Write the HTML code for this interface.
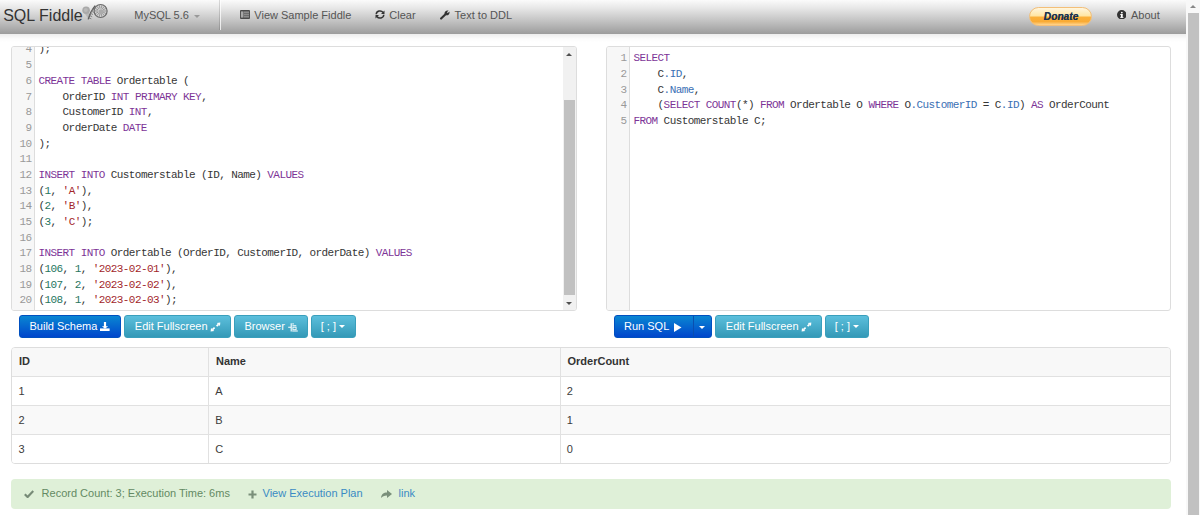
<!DOCTYPE html>
<html><head><meta charset="utf-8">
<style>
*{box-sizing:border-box;margin:0;padding:0}
html,body{width:1200px;height:515px;overflow:hidden;background:#fff;font-family:"Liberation Sans",sans-serif;color:#333}
.t{position:absolute;white-space:nowrap;font-size:11px;line-height:11px}
#nav{position:absolute;left:0;top:0;width:1186px;height:34px;background:linear-gradient(#fbfbfb,#e6e6e6 25%,#c9c9c9 55%,#9c9c9c);}
#nav .t{color:#555;top:9.5px}
#brand{position:absolute;left:3.2px;top:7.8px;font-size:16px;color:#333;line-height:16px;white-space:nowrap}
.divv{position:absolute;left:219px;top:0;width:2px;height:30px;border-left:1px solid rgba(0,0,0,0.13);border-right:1px solid rgba(255,255,255,0.75)}
#donate{position:absolute;left:1029px;top:7px;width:63px;height:19px;border-radius:10px;border:1px solid #f3bf78;background:linear-gradient(#fff6df,#ffe6a6 45%,#fbb03a 55%,#f9ab35 80%,#ffd590);}
#donate span{position:absolute;left:13.8px;top:2.8px;font-size:10.2px;line-height:11px;font-weight:bold;font-style:italic;color:#1d3350;text-shadow:0 0 0.4px #1d3350}
#vscroll{position:absolute;left:1186px;top:0;width:14px;height:515px;background:#f8f8f8}
#vscroll .thumb{position:absolute;left:2px;top:12.5px;width:11px;height:520px;background:#c1c1c1}
#vscroll .arr{position:absolute;left:4.2px;top:5px;width:0;height:0;border-left:3.5px solid transparent;border-right:3.5px solid transparent;border-bottom:3.3px solid #888}
.editor{position:absolute;top:46px;height:265px;border:1px solid #ddd;border-radius:3px;background:#fff;overflow:hidden}
.gutter{position:absolute;left:0;top:0;bottom:0;width:23px;background:#f7f7f7;border-right:1px solid #ddd}
.code{position:absolute;font-family:"Liberation Mono",monospace;font-size:11px;letter-spacing:-0.58px;line-height:15.69px;white-space:pre;color:#363636}
.sb{position:absolute;right:0;top:0;bottom:0;width:13px;background:#f1f1f1}
.sbth{position:absolute;left:1px;right:1px;top:53px;height:195px;background:#c1c1c1}
.up{position:absolute;left:3px;top:6px;width:0;height:0;border-left:3px solid transparent;border-right:3px solid transparent;border-bottom:3px solid #505050}
.dn{position:absolute;left:3px;bottom:5.4px;width:0;height:0;border-left:3px solid transparent;border-right:3px solid transparent;border-top:3px solid #505050}
.ln{position:absolute;font-family:"Liberation Mono",monospace;font-size:11px;letter-spacing:-0.58px;line-height:15.69px;white-space:pre;color:#999;text-align:right}
.k{color:#7d3497}
.s{color:#a2262b}
.n{color:#267660}
.v{color:#3a70b4}
.btn{position:absolute;top:315px;height:23px;border-radius:3px;overflow:hidden}
.btn .t{color:#fff;top:11.5px}
.bp{background:linear-gradient(#0a86d2,#0046cc);border:1px solid #0050c0}
.bi{background:linear-gradient(#5cbfdc,#3499b7);border:1px solid #3a9fbc}
#tbl{position:absolute;left:11px;top:347px;width:1160px;height:117px;border:1px solid #ddd;border-radius:4px;overflow:hidden}
.row{position:absolute;left:0;width:1158px;height:29px;border-top:1px solid #e1e1e1}
.row .t{top:8.8px;color:#3c3c3c}
.vl{position:absolute;top:0;width:1px;height:116px;background:#e1e1e1}
#alert{position:absolute;left:11px;top:479px;width:1160px;height:30px;background:#dff0d8;border-radius:4px}
#alert .t{top:8.9px}
</style></head><body>
<div id="nav">
  <div id="brand">SQL Fiddle</div>
  <svg style="position:absolute;left:78px;top:0px" width="34" height="24" viewBox="0 0 34 24">
    <path d="M6 12.5 L10.3 18.8 L11.2 13z" fill="#b8b8b8"/>
    <circle cx="8.1" cy="10.3" r="3.8" fill="#a9a9a9"/>
    <circle cx="7.8" cy="10" r="2" fill="#b9b9b9"/>
    <circle cx="22.6" cy="11.0" r="6.3" fill="#d2d2d2"/>
    <path d="M25.20 11.00L28.50 11.00M24.94 12.13L27.92 13.56M24.22 13.03L26.28 15.61M23.18 13.53L23.91 16.75M22.02 13.53L21.29 16.75M20.98 13.03L18.92 15.61M20.26 12.13L17.28 13.56M20.00 11.00L16.70 11.00M20.26 9.87L17.28 8.44M20.98 8.97L18.92 6.39M22.02 8.47L21.29 5.25M23.18 8.47L23.91 5.25M24.22 8.97L26.28 6.39M24.94 9.87L27.92 8.44" stroke="#8e8e8e" stroke-width="0.85"/>
    <circle cx="23.1" cy="11.7" r="2.5" fill="#ababab"/>
    <circle cx="22.6" cy="11.0" r="6.5" fill="none" stroke="#6a6a6a" stroke-width="1.2"/>
    <path d="M10.2 19.3 Q12.3 11.5 17.2 5.6" fill="none" stroke="#5e5e5e" stroke-width="1.3"/>
    <path d="M10.65 17.76l2.7 1.1M11.43 15.52l2.7 1.1M12.33 13.36l2.7 1.1M13.36 11.29l2.7 1.1M14.51 9.31l2.7 1.1" stroke="#7d7d7d" stroke-width="0.9"/>
  </svg>
  <div class="t" style="left:134.3px">MySQL 5.6</div>
  <div style="position:absolute;left:194px;top:14.5px;width:0;height:0;border-left:3px solid transparent;border-right:3px solid transparent;border-top:3px solid #999"></div>
  <div class="divv"></div>
  <svg style="position:absolute;left:240px;top:10px" width="10" height="9" viewBox="0 0 10 9"><rect x="0" y="0" width="10" height="9" rx="1" fill="#4a4a4a"/><rect x="0.9" y="1.4" width="2.6" height="6.2" fill="#a8a8a8"/><rect x="4" y="1.4" width="5.1" height="6.2" fill="#8c8c8c"/><path d="M4 3.5h5.1M4 5.5h5.1" stroke="#666" stroke-width="0.8"/></svg>
  <div class="t" style="left:254.3px">View Sample Fiddle</div>
  <svg style="position:absolute;left:375px;top:10px" width="10" height="9" viewBox="0 0 10 9"><path d="M1.2 4.3 A3.8 3.6 0 0 1 8.1 2.5" fill="none" stroke="#333" stroke-width="1.5"/><path d="M9.5 0.5 V4 H6 Z" fill="#333"/><path d="M8.8 4.7 A3.8 3.6 0 0 1 1.9 6.5" fill="none" stroke="#333" stroke-width="1.5"/><path d="M0.5 8.5 V5 H4 Z" fill="#333"/></svg>
  <div class="t" style="left:389.3px">Clear</div>
  <svg style="position:absolute;left:439.5px;top:9.5px" width="10" height="10" viewBox="0 0 10 10"><path d="M1.1 8.6 L5.8 3.9" stroke="#333" stroke-width="2.1" stroke-linecap="round"/><path d="M4.6 3.9 C4.2 1.6 6.2 0 8.6 0.5 L6.9 2.2 L7.8 3.1 L9.5 1.4 C10 3.8 8.4 5.7 6 5.3 Z" fill="#333"/></svg>
  <div class="t" style="left:454.6px">Text to DDL</div>
  <div id="donate"><span>Donate</span></div>
  <svg style="position:absolute;left:1116.5px;top:9.7px" width="9.5" height="9.5" viewBox="0 0 10 10"><circle cx="5" cy="5" r="5" fill="#333"/><rect x="4.1" y="4.2" width="1.9" height="3.8" fill="#fff"/><rect x="3.4" y="4.2" width="2.2" height="1" fill="#fff"/><rect x="3.4" y="7.3" width="3.4" height="0.9" fill="#fff"/><circle cx="5.1" cy="2.7" r="0.95" fill="#fff"/></svg>
  <div class="t" style="left:1131px">About</div>
</div>
<div style="position:absolute;left:0;top:34px;width:1186px;height:8px;background:linear-gradient(rgba(0,0,0,0.075),rgba(0,0,0,0.02) 55%,rgba(0,0,0,0))"></div>
<div id="vscroll"><div class="arr"></div><div class="thumb"></div></div>

<div class="editor" style="left:11px;width:566px">
  <div class="gutter"></div>
  <div class="ln" style="left:0;width:19.5px;top:-51.6px">1
2
3
4
5
6
7
8
9
10
11
12
13
14
15
16
17
18
19
20</div>
  <div class="code" style="left:26.5px;top:-51.6px"><span class="k">CREATE</span> <span class="k">TABLE</span> Customerstable (
    ID <span class="k">INT</span> <span class="k">PRIMARY</span> <span class="k">KEY</span>,
    Name <span class="k">VARCHAR</span>(<span class="n">50</span>)
);

<span class="k">CREATE</span> <span class="k">TABLE</span> Ordertable (
    OrderID <span class="k">INT</span> <span class="k">PRIMARY</span> <span class="k">KEY</span>,
    CustomerID <span class="k">INT</span>,
    OrderDate <span class="k">DATE</span>
);

<span class="k">INSERT</span> <span class="k">INTO</span> Customerstable (ID, Name) <span class="k">VALUES</span>
(<span class="n">1</span>, <span class="s">'A'</span>),
(<span class="n">2</span>, <span class="s">'B'</span>),
(<span class="n">3</span>, <span class="s">'C'</span>);

<span class="k">INSERT</span> <span class="k">INTO</span> Ordertable (OrderID, CustomerID, orderDate) <span class="k">VALUES</span>
(<span class="n">106</span>, <span class="n">1</span>, <span class="s">'2023-02-01'</span>),
(<span class="n">107</span>, <span class="n">2</span>, <span class="s">'2023-02-02'</span>),
(<span class="n">108</span>, <span class="n">1</span>, <span class="s">'2023-02-03'</span>);</div>
  <div class="sb"><div class="sbth"></div><div class="up"></div><div class="dn"></div></div>
</div>
<div class="editor" style="left:606px;width:565px">
  <div class="gutter"></div>
  <div class="ln" style="left:0;width:19.5px;top:4.4px">1
2
3
4
5</div>
  <div class="code" style="left:26.5px;top:4.4px"><span class="k">SELECT</span>
    C<span class="v">.ID</span>,
    C<span class="v">.Name</span>,
    (<span class="k">SELECT</span> <span class="k">COUNT</span>(*) <span class="k">FROM</span> Ordertable O <span class="k">WHERE</span> O<span class="v">.CustomerID</span> = C<span class="v">.ID</span>) <span class="k">AS</span> OrderCount
<span class="k">FROM</span> Customerstable C;</div>
</div>

<div class="btn bp" style="left:19px;width:102px"><div class="t" style="left:9.5px;top:5px">Build Schema</div>
  <svg style="position:absolute;left:80px;top:6px" width="10" height="9" viewBox="0 0 10 9"><path d="M3.9 0h2.2v4.3h2L5 6.8 1.9 4.3h2z" fill="#fff"/><rect x="0" y="6.4" width="9.6" height="2.6" fill="#fff"/></svg></div>
<div class="btn bi" style="left:124px;width:107px"><div class="t" style="left:9.8px;top:5px">Edit Fullscreen</div>
  <svg style="position:absolute;left:85px;top:6px" width="11" height="10" viewBox="0 0 11 10"><path d="M2.5 7.6 L4.6 5.7 M6.6 4.2 L8.5 2.4" stroke="#fff" stroke-width="1.7"/><path d="M0.6 9.6 L1 6 L4.3 8.9z M10.3 0.5 L10 4 L6.8 1.1z" fill="#fff"/></svg></div>
<div class="btn bi" style="left:234px;width:74px"><div class="t" style="left:9.5px;top:5px">Browser</div>
  <svg style="position:absolute;left:52.5px;top:6.5px" width="10" height="9" viewBox="0 0 10 9"><path d="M0.2 4.2h2.6 M3.2 0.2v8.4 M4.4 0.9h1.3 M4.4 2.8h3.9 M4.2 8h5.6" stroke="#fff" stroke-width="1.1"/><rect x="4.9" y="4.2" width="3.2" height="2.5" fill="none" stroke="#fff" stroke-width="0.9"/></svg></div>
<div class="btn bi" style="left:311px;width:45px"><div class="t" style="left:8.7px;top:5px">[ ; ]</div>
  <div style="position:absolute;left:27.3px;top:9px;width:0;height:0;border-left:3.3px solid transparent;border-right:3.3px solid transparent;border-top:3.5px solid #fff"></div></div>

<div class="btn bp" style="left:614px;width:98px"><div class="t" style="left:9px;top:5px">Run SQL</div>
  <svg style="position:absolute;left:59px;top:7px" width="8" height="9" viewBox="0 0 8 9"><path d="M0 0 L7.5 4.5 L0 9z" fill="#fff"/></svg>
  <div style="position:absolute;left:78px;top:0;width:1px;height:23px;background:#0a4fb0"></div>
  <div style="position:absolute;left:84px;top:9.5px;width:0;height:0;border-left:3px solid transparent;border-right:3px solid transparent;border-top:3.2px solid #fff"></div></div>
<div class="btn bi" style="left:715px;width:107px"><div class="t" style="left:9.8px;top:5px">Edit Fullscreen</div>
  <svg style="position:absolute;left:85px;top:6px" width="11" height="10" viewBox="0 0 11 10"><path d="M2.5 7.6 L4.6 5.7 M6.6 4.2 L8.5 2.4" stroke="#fff" stroke-width="1.7"/><path d="M0.6 9.6 L1 6 L4.3 8.9z M10.3 0.5 L10 4 L6.8 1.1z" fill="#fff"/></svg></div>
<div class="btn bi" style="left:825px;width:44px"><div class="t" style="left:8.7px;top:5px">[ ; ]</div>
  <div style="position:absolute;left:27.3px;top:9px;width:0;height:0;border-left:3.3px solid transparent;border-right:3.3px solid transparent;border-top:3.5px solid #fff"></div></div>
<div id="tbl">
  <div class="row" style="top:-1px;background:#f8f8f8;border-top:none"><div class="t" style="left:7px;top:9.4px;font-weight:bold;color:#333">ID</div><div class="t" style="left:204px;top:9.4px;font-weight:bold;color:#333">Name</div><div class="t" style="left:555.5px;top:9.4px;font-weight:bold;color:#333">OrderCount</div></div>
  <div class="row" style="top:28px;background:#fff"><div class="t" style="left:6.5px">1</div><div class="t" style="left:203.2px">A</div><div class="t" style="left:554.8px">2</div></div>
  <div class="row" style="top:57px;background:#f9f9f9"><div class="t" style="left:6.5px">2</div><div class="t" style="left:203.2px">B</div><div class="t" style="left:554.8px">1</div></div>
  <div class="row" style="top:86px;background:#fff"><div class="t" style="left:6.5px">3</div><div class="t" style="left:203.2px">C</div><div class="t" style="left:554.8px">0</div></div>
  <div class="vl" style="left:196px"></div>
  <div class="vl" style="left:548px"></div>
</div>
<div id="alert">
  <svg style="position:absolute;left:13px;top:11px" width="10" height="8" viewBox="0 0 10 8"><path d="M0.8 4.2 L3.6 7 L9.3 1" fill="none" stroke="#778b77" stroke-width="2.2"/></svg>
  <div class="t" style="left:30.6px;color:#638a63">Record Count: 3; Execution Time: 6ms</div>
  <svg style="position:absolute;left:237px;top:10.5px" width="9" height="9" viewBox="0 0 9 9"><path d="M4.5 0.5v8 M0.5 4.5h8" stroke="#7a8f7a" stroke-width="2.2"/></svg>
  <div class="t" style="left:251.5px;color:#3a8bc4">View Execution Plan</div>
  <svg style="position:absolute;left:369.5px;top:10.5px" width="11" height="8" viewBox="0 0 11 8"><path d="M6 0 L11 4 L6 8 V5.5 C3 5.5 1.5 6.5 0 8 C0.5 4 2.5 2.5 6 2.5z" fill="#7a8f7a"/></svg>
  <div class="t" style="left:387.5px;color:#3a8bc4">link</div>
</div>
</body></html>
